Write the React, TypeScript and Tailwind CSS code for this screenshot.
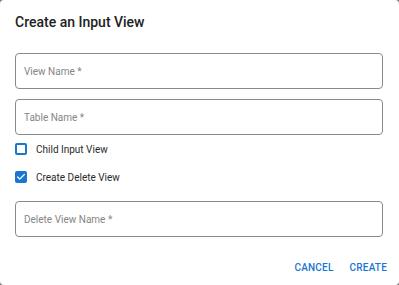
import { Check } from "lucide-react";

const Field = ({ label }: { label: string }) => (
  <div className="h-9 w-full rounded-[4px] border border-[#8a8a8a] flex items-center px-2 text-[10px] text-[#858585]">
    {label} *
  </div>
);

const Box = ({ checked, label }: { checked?: boolean; label: string }) => (
  <label className="flex items-center gap-[9px] h-[28px] text-[10px] text-[#2a2a2a]">
    {checked ? (
      <span className="w-3 h-3 rounded-[2px] bg-[#1976d2] flex items-center justify-center">
        <Check className="w-[10px] h-[10px] text-white" strokeWidth={3} />
      </span>
    ) : (
      <span className="w-3 h-3 rounded-[2px] border-2 border-[#1976d2]" />
    )}
    {label}
  </label>
);

export default function App() {
  return (
    <div className="w-[399px] h-[285px] bg-[#7a7a7a]" style={{ fontFamily: "Roboto, sans-serif" }}>
      <div className="w-full h-full bg-white rounded-[4px] flex flex-col pl-[15px] pr-4">
        <h2 className="pt-[12px] text-[14px] font-medium text-[#222] h-[53px]">Create an Input View</h2>
        <Field label="View Name" />
        <div className="h-[10px]" />
        <Field label="Table Name" />
        <div>
          <Box label="Child Input View" />
          <Box checked label="Create Delete View" />
        </div>
        <div className="pt-[10px]">
          <Field label="Delete View Name" />
        </div>
        <div className="flex justify-end gap-4 mt-auto -mr-1 pb-[10px] text-[10px] font-medium text-[#1976d2] tracking-[0.2px]">
          <button>CANCEL</button>
          <button>CREATE</button>
        </div>
      </div>
    </div>
  );
}
